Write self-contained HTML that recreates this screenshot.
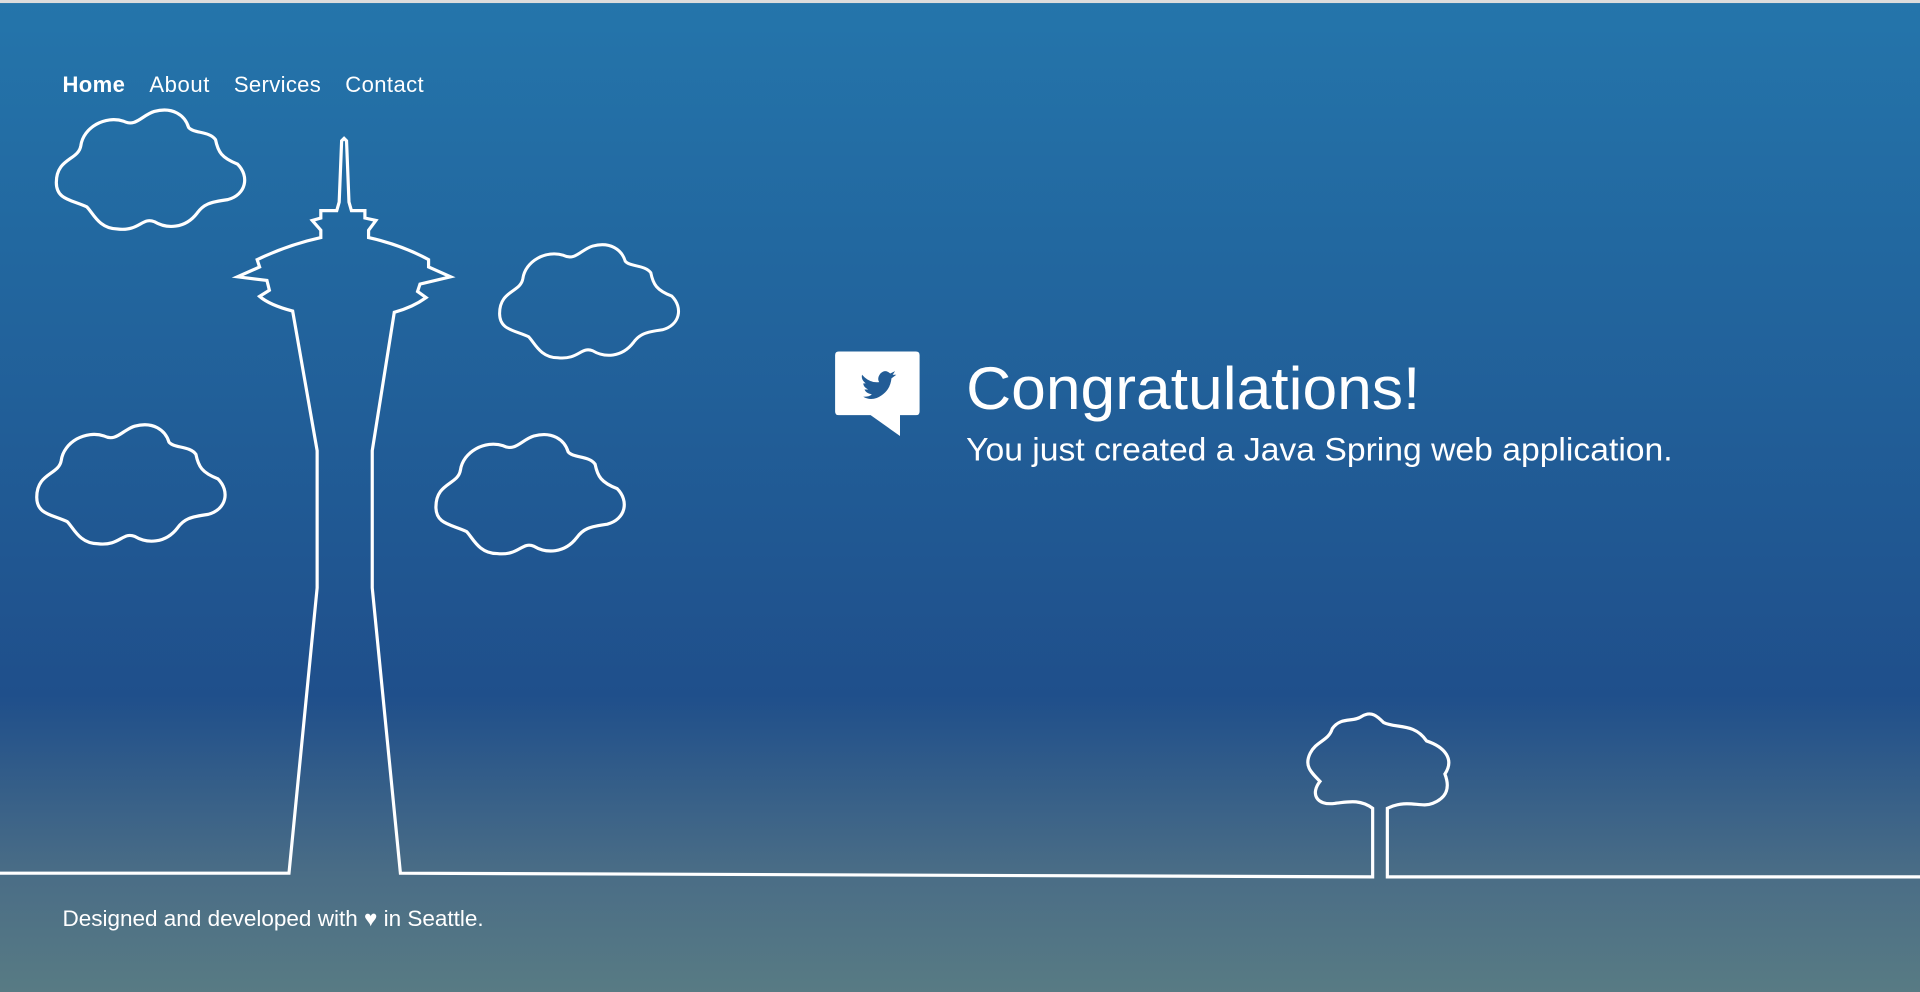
<!DOCTYPE html>
<html><head><meta charset="utf-8"><style>
html,body{margin:0;padding:0;width:1920px;height:992px;overflow:hidden;background:#ddd}
svg{display:block}
text{font-family:"Liberation Sans",Arial,sans-serif;fill:#fff}
</style></head><body>
<svg width="1920" height="992" viewBox="0 0 1568 810" preserveAspectRatio="none">
<defs>
<linearGradient id="g" x1="0" y1="0" x2="0" y2="1">
<stop offset="0" stop-color="#2475ab"/>
<stop offset="0.7" stop-color="#1f4f8b"/>
<stop offset="0.88" stop-color="#4a6d86"/>
<stop offset="1" stop-color="#587b84"/>
</linearGradient>
<path id="cl" d="M20,30 C22,15 40,5 55,10 C65,15 70,5 80,2 C95,-2 105,5 108,15 C112,20 125,18 130,25 C132,35 135,40 148,45 C158,55 155,70 140,74 C125,76 120,78 115,85 C105,98 90,98 80,92 C70,88 68,100 50,98 C35,98 30,85 25,80 C12,74 0,74 0,60 C0,40 18,42 20,30 Z" fill="none" stroke="#fff" stroke-width="2.6"/>
</defs>
<rect x="0" y="2.5" width="1568" height="808" fill="url(#g)"/>
<g font-size="18">
<text x="51" y="75" font-weight="bold" textLength="51">Home</text>
<text x="122" y="75" textLength="49">About</text>
<text x="191" y="75" textLength="71">Services</text>
<text x="282" y="75" textLength="64">Contact</text>
</g>
<use href="#cl" transform="translate(46,89) scale(1,1)"/>
<use href="#cl" transform="translate(408,199) scale(0.95,0.95)"/>
<use href="#cl" transform="translate(30,346) scale(1,1)"/>
<use href="#cl" transform="translate(356,354) scale(1,1)"/>
<path d="M0,713 L236,713 L259,480 L259,368 L239,254 Q220,249 212,242 L220,237 L218,229 L194,226 L212,218 L210,212 Q235,200 262,194 L262,188 L255,180 L262,178 L262,172 L275,172 L277,165 L279,115 L281,113 L283,115 L285,165 L287,172 L298,172 L298,178 L307,180 L301,188 L301,194 Q328,200 350,212 L350,218 L368,226 L343,232 L341,238 L348,243 Q337,251 322,255 L304,368 L304,480 L327,713 L1121,716 L1121,660 C1110,652 1100,655 1090,656 C1075,658 1070,648 1078,638 C1070,630 1065,625 1070,615 C1075,605 1085,605 1088,595 C1095,585 1105,590 1112,585 C1120,580 1125,585 1130,590 C1140,595 1155,590 1165,605 C1180,610 1188,620 1180,632 C1185,645 1180,652 1170,656 C1160,660 1150,652 1133,660 L1133,716 L1568,716" fill="none" stroke="#fff" stroke-width="2.6"/>
<path d="M685,287 H748 Q751,287 751,290 V336 Q751,339 748,339 H735 V356 L711,339 H685 Q682,339 682,336 V290 Q682,287 685,287 Z" fill="#fff"/>
<path d="M704,306 Q710,313 718,312 Q716,309 719,305 Q723,301 727,305 L731,303 L729,306 L732,306 L728,309 Q727,320 716,325 Q710,327 705,324 Q710,324 712,322 Q707,321 706,318 L709,318 Q705,316 705,313 L707,313 Q703,310 704,306 Z" fill="#225c96"/>
<text x="789" y="334" font-size="49" textLength="371" lengthAdjust="spacingAndGlyphs">Congratulations!</text>
<text x="789" y="376" font-size="26.5" textLength="577" lengthAdjust="spacingAndGlyphs">You just created a Java Spring web application.</text>
<text x="51" y="756" font-size="18" textLength="344" lengthAdjust="spacingAndGlyphs">Designed and developed with ♥ in Seattle.</text>
</svg>
</body></html>
